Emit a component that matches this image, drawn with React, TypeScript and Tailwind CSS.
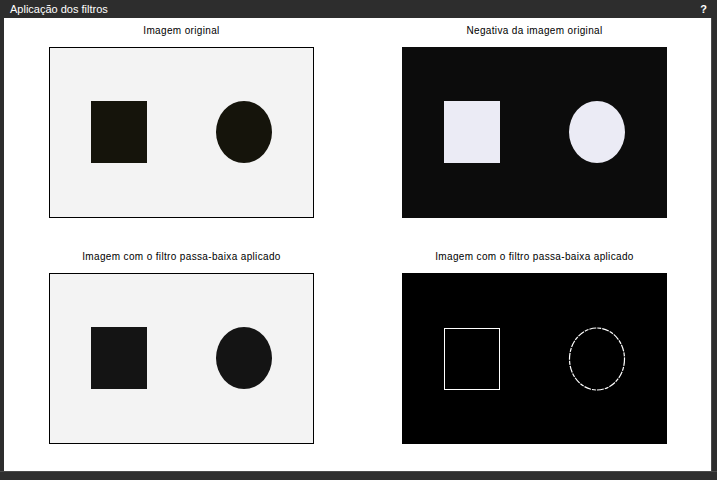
import React from "react";

type Kind = "original" | "negative" | "lowpass" | "edges";

function Figure({ kind }: { kind: Kind }) {
  const bg =
    kind === "original" || kind === "lowpass"
      ? "#f3f3f3"
      : kind === "negative"
      ? "#0c0c0c"
      : "#000000";
  const fill =
    kind === "original" ? "#15140b" : kind === "negative" ? "#ebebf5" : kind === "lowpass" ? "#141414" : "none";
  const bordered = kind === "original" || kind === "lowpass";

  return (
    <div
      className={
        "w-[265px] h-[171px] " + (bordered ? "border border-black" : "")
      }
      style={{ background: bg }}
    >
      <svg width="100%" height="100%" viewBox={bordered ? "1 1 263 169" : "0 0 265 171"}>
        {kind === "edges" ? (
          <>
            <rect x="42.5" y="55.5" width="55" height="61" fill="none" stroke="#fff" strokeWidth="1" />
            <ellipse
              cx="195"
              cy="86"
              rx="27.5"
              ry="31"
              fill="none"
              stroke="#fff"
              strokeWidth="1.2"
              strokeDasharray="7 1 4 1"
            />
          </>
        ) : (
          <>
            <rect x="42" y="54" width="56" height="62" fill={fill} />
            <ellipse cx="195" cy="85" rx="28" ry="31" fill={fill} />
          </>
        )}
      </svg>
    </div>
  );
}

function Cell({ title, kind }: { title: string; kind: Kind }) {
  return (
    <div className="flex flex-col items-center w-[265px]">
      <div className="h-[12px] leading-[12px] text-[10px] tracking-[0.035em] text-black mb-[10px] whitespace-nowrap">
        {title}
      </div>
      <Figure kind={kind} />
    </div>
  );
}

export default function App() {
  return (
    <div
      className="w-[717px] h-[480px] bg-[#2d2d2d] flex flex-col overflow-hidden"
      style={{ fontFamily: '"Liberation Sans", Arial, sans-serif' }}
    >
      {/* title bar */}
      <div className="h-[18px] flex items-center justify-between pl-[10px] pr-[10px]">
        <span className="text-white text-[11px] leading-none">Aplicação dos filtros</span>
        <span className="text-white text-[11px] font-bold leading-none">?</span>
      </div>

      <div className="flex h-[453px]">
        <div className="w-[4px]" />
        <div className="flex-1 bg-white pt-[7px] pl-[45px]">
          <div className="grid grid-cols-[265px_265px] gap-x-[88px] gap-y-[33px]">
            <Cell title="Imagem original" kind="original" />
            <Cell title="Negativa da imagem original" kind="negative" />
            <Cell title="Imagem com o filtro passa-baixa aplicado" kind="lowpass" />
            <Cell title="Imagem com o filtro passa-baixa aplicado" kind="edges" />
          </div>
        </div>
        <div className="w-[6px] border-l border-[#4a4a4a]" />
      </div>

      <div className="flex-1 border-t border-[#4a4a4a] bg-[#2f2f2f]" />
    </div>
  );
}
